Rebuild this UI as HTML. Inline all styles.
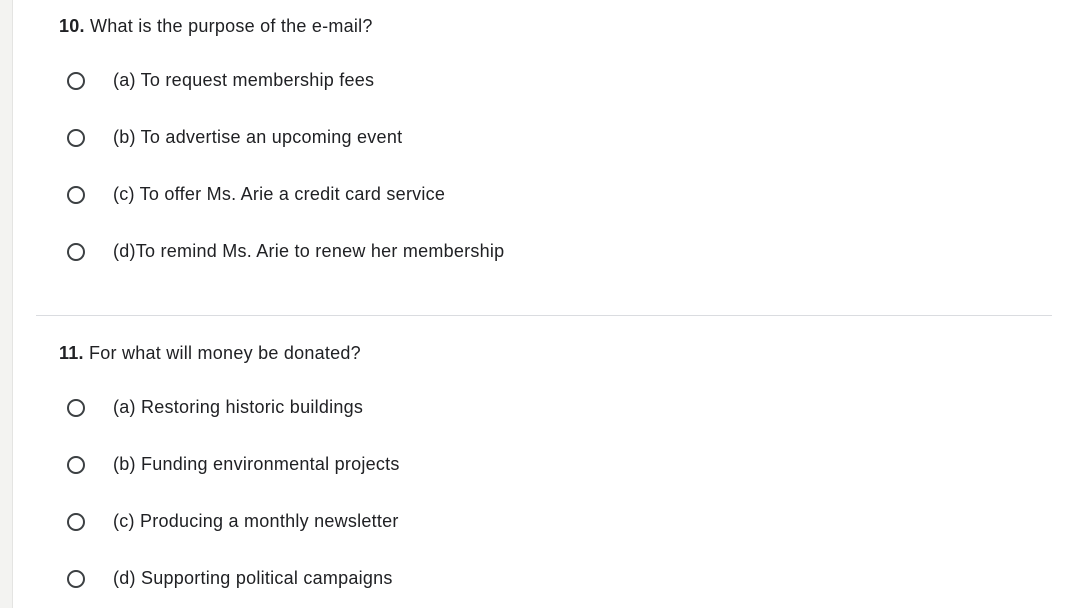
<!DOCTYPE html>
<html><head><meta charset="utf-8"><style>
html,body{margin:0;padding:0;width:1066px;height:608px;overflow:hidden;background:#fff;font-family:"Liberation Sans",Arial,sans-serif;color:#202124}
.strip{position:absolute;left:0;top:0;width:12px;height:608px;background:#f3f3f1;border-right:1px solid #e4e4e2}
.t{position:absolute;font-size:18px;letter-spacing:0.25px;white-space:nowrap;line-height:20px}
.q{left:59px}
.q b{font-weight:bold}
.o{left:113px}
.c{position:absolute;left:67px;width:14px;height:14px;border:2px solid #3c4043;border-radius:50%}
.hr{position:absolute;left:36px;top:315px;width:1016px;height:1px;background:#dadce0}
</style></head><body>
<div class="strip"></div>
<div class="t q" style="top:16px"><b>10.</b> What is the purpose of the e-mail?</div>
<div class="c" style="top:72px"></div><div class="t o" style="top:70px">(a) To request membership fees</div>
<div class="c" style="top:129px"></div><div class="t o" style="top:127px">(b) To advertise an upcoming event</div>
<div class="c" style="top:186px"></div><div class="t o" style="top:184px">(c) To offer Ms. Arie a credit card service</div>
<div class="c" style="top:243px"></div><div class="t o" style="top:241px">(d)To remind Ms. Arie to renew her membership</div>
<div class="hr"></div>
<div class="t q" style="top:343px"><b>11.</b> For what will money be donated?</div>
<div class="c" style="top:399px"></div><div class="t o" style="top:397px">(a) Restoring historic buildings</div>
<div class="c" style="top:456px"></div><div class="t o" style="top:454px">(b) Funding environmental projects</div>
<div class="c" style="top:513px"></div><div class="t o" style="top:511px">(c) Producing a monthly newsletter</div>
<div class="c" style="top:570px"></div><div class="t o" style="top:568px">(d) Supporting political campaigns</div>
</body></html>
